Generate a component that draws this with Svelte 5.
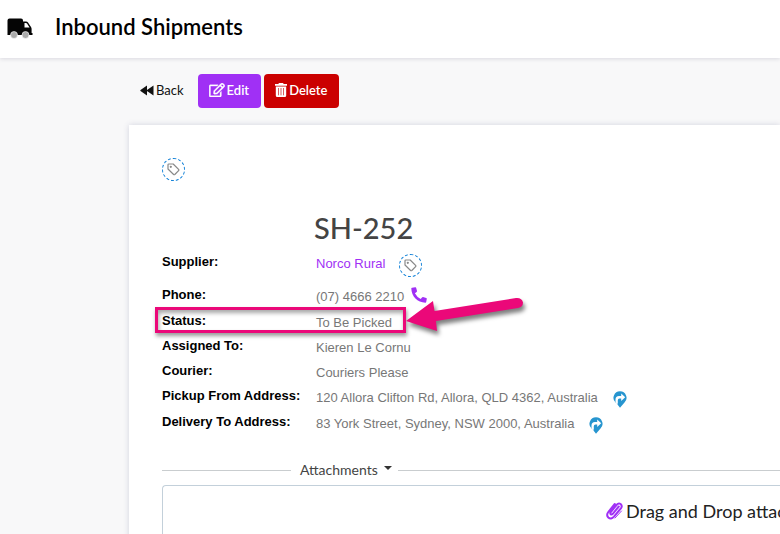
<script lang="ts">
  interface Detail {
    label: string;
    value: string;
    kind?: "supplier" | "phone" | "status" | "address";
  }

  const details: Detail[] = [
    { label: "Supplier", value: "Norco Rural", kind: "supplier" },
    { label: "Phone", value: "(07) 4666 2210", kind: "phone" },
    { label: "Status", value: "To Be Picked", kind: "status" },
    { label: "Assigned To", value: "Kieren Le Cornu" },
    { label: "Courier", value: "Couriers Please" },
    { label: "Pickup From Address", value: "120 Allora Clifton Rd, Allora, QLD 4362, Australia", kind: "address" },
    { label: "Delivery To Address", value: "83 York Street, Sydney, NSW 2000, Australia", kind: "address" },
  ];

  let showAttachments = $state(true);
</script>

{#snippet tagButton()}
  <button class="tag-btn" aria-label="Add tag">
    <svg width="13" height="13" viewBox="0 0 13 13" fill="none" stroke="#888" stroke-width="1.2" stroke-linejoin="round">
      <path d="M1 1.8 Q1 1 1.8 1 H6.2 L11.6 6.4 Q12.2 7 11.6 7.6 L7.8 11.5 Q7.2 12 6.6 11.5 L1 6 Z" />
      <circle cx="3.8" cy="3.8" r="0.5" fill="#888" />
    </svg>
  </button>
{/snippet}

<div class="page">
  <header class="header">
    <svg class="truck" width="26" height="21" viewBox="0 0 26 21">
      <path d="M2.5 .5 H14 Q16 .5 16 2.5 V3.5 H19 Q20.3 3.5 21 4.5 L24 9 Q24.6 10 24.6 11 V15 H25.5 V17 H0.5 V2.5 Q.5 .5 2.5 .5 Z" fill="#050505" />
      <path d="M17.5 5 H19 Q19.6 5 20 5.6 L22.6 9.5 H17.5 Z" fill="#fff" />
      <circle cx="7" cy="17" r="3.5" fill="#aaa" stroke="#fff" stroke-width=".6" />
      <circle cx="18.5" cy="17" r="3.5" fill="#aaa" stroke="#fff" stroke-width=".6" />
    </svg>
    <h1>Inbound Shipments</h1>
  </header>

  <main>
    <div class="toolbar">
      <button class="back-btn">
        <svg width="14" height="11" viewBox="0 0 14 11" fill="#111">
          <path d="M7 .5 V10.5 L.5 6 Q0 5.500 .5 5 Z M13.500 .5 V10.500 L7 6 Q6.500 5.500 7 5 Z" />
        </svg>
        Back
      </button>
      <button class="btn edit-btn">
        <svg width="16" height="14" viewBox="0 0 576 512" fill="currentColor" stroke="currentColor" stroke-width="12">
          <path d="M402.300 344.900l32-32c5-5 13.700-1.500 13.700 5.700V464c0 26.500-21.500 48-48 48H48c-26.500 0-48-21.500-48-48V112c0-26.500 21.500-48 48-48h273.500c7.100 0 10.700 8.600 5.700 13.700l-32 32c-1.500 1.500-3.500 2.300-5.700 2.300H48v352h352V350.500c0-2.100.8-4.100 2.300-5.600zm156.600-201.800L296.300 405.700l-90.400 10c-26.200 2.900-48.500-19.200-45.600-45.600l10-90.400L432.900 17.100c22.900-22.900 59.900-22.900 82.700 0l43.200 43.200c22.900 22.900 22.900 60 .1 82.800zM460.100 174L402 115.900 216.200 301.800l-7.300 65.300 65.300-7.300L460.100 174zm64.800-79.700l-43.200-43.200c-4.100-4.100-10.800-4.100-14.800 0L436 82l58.100 58.100 30.900-30.900c4-4.200 4-10.800-.1-14.900z" />
        </svg>
        Edit
      </button>
      <button class="btn delete-btn">
        <svg width="12" height="14" viewBox="0 0 12 14">
          <path d="M4 0 H8 L8.700 1 H12 V2.700 H0 V1 H3.300 Z M.8 3.500 H11.200 V12.500 Q11.200 14 9.700 14 H2.300 Q.8 14 .8 12.500 Z" fill="#fff" />
          <path d="M3.500 5 V12.300 M6 5 V12.300 M8.500 5 V12.300" stroke="#d96060" stroke-width="1" />
        </svg>
        Delete
      </button>
    </div>

    <section class="card">
      {@render tagButton()}
      <h2>SH-252</h2>

      <dl>
        {#each details as { label, value, kind }}
          <div class="row {kind ?? ''}">
            <dt>{label}:</dt>
            <dd>
              {#if kind === "supplier"}
                <a href="#supplier">{value}</a>
                {@render tagButton()}
              {:else if kind === "phone"}
                {value}
                <a class="call" href="tel:0746662210" aria-label="Call">
                  <svg width="16" height="16" viewBox="0 0 16 16" fill="#a030f5">
                    <path d="M1 .8 L4.300 .3 Q5 .2 5.200 .9 L6 4.100 Q6.100 4.700 5.600 5.100 L3.900 6.300 Q5.800 10 9.700 12.100 L11 10.400 Q11.400 10 12 10.100 L15.200 11 Q15.800 11.200 15.800 11.800 L15.200 15 Q15.100 15.700 14.400 15.700 C6.500 15.500 .5 9.500 .3 1.600 Q.3 .9 1 .8 Z" />
                  </svg>
                </a>
              {:else}
                {value}
                {#if kind === "address"}
                  <a class="map" href="#map" aria-label="Directions">
                    <svg width="14" height="17" viewBox="0 0 14 17">
                      <path d="M7 .3 A6.500 6.500 0 0 1 11.500 11.500 L7 16.700 L4.500 13.500 V12.500 L2.500 11.500 A6.500 6.500 0 0 1 7 .3 Z" fill="#2795cf" />
                      <path d="M2.500 11.500 V8.500 Q2.500 5 6 5 H8.200 V2.500 L12.200 6.300 L8.200 10 V7.600 H6.500 Q4.800 7.600 4.800 9.200 V12.800 Z" fill="#fff" />
                    </svg>
                  </a>
                {/if}
              {/if}
            </dd>
            {#if kind === "status"}
              <span class="highlight"></span>
              <svg class="arrow" width="124" height="44" viewBox="0 0 124 44">
                <path d="M1 25 L28 5 L29.500 15 L111 2 Q117 1.500 118 6.500 Q118 11 113 12 L31 25 L32 35 Z" fill="#eb0879" />
              </svg>
            {/if}
          </div>
        {/each}
      </dl>

      <div class="divider">
        <button onclick={() => (showAttachments = !showAttachments)}>
          Attachments
          <span class="caret"></span>
        </button>
      </div>

      {#if showAttachments}
        <div class="dropzone">
          <svg width="17" height="19" viewBox="0 0 17 19" fill="none" stroke="#a030f5" stroke-width="2" stroke-linecap="round">
            <path d="M12.800 5.500 L6.800 12.800 Q5.600 14 4.700 13.200 Q3.800 12.300 4.800 11 L10.500 4 Q12.500 1.500 14.600 3 Q16.700 5 14.900 7.300 L8 15.700 Q5 19 2.300 16.500 Q0 14 2.300 11 L8.800 3" />
            <path d="M15.500 10 L9 17" stroke-width="1" />
          </svg>
          Drag and Drop attachments here
        </div>
      {/if}
    </section>
  </main>
</div>

<style>
  :global(body) {
    margin: 0;
    background: #f8f8f9;
  }

  .page {
    height: 100vh;
    overflow: hidden;
    display: flex;
    flex-direction: column;
    font-family: Lato, sans-serif;
    color: #222;
  }

  .header {
    display: flex;
    align-items: center;
    gap: 22px;
    height: 58px;
    flex-shrink: 0;
    padding-left: 7px;
    box-sizing: border-box;
    background: #fff;
    box-shadow: 0 1px 4px rgba(50, 40, 80, 0.15);
  }

  .truck {
    margin-bottom: 2px;
  }

  h1 {
    margin: 0 0 4px;
    font-size: 22px;
    font-weight: 600;
    line-height: 28px;
    color: #000;
  }

  main {
    flex: 1;
    display: flex;
    flex-direction: column;
    padding: 16px 0 0 129px;
  }

  .toolbar {
    display: flex;
    gap: 3px;
    margin-bottom: 17px;
  }

  button {
    font-family: inherit;
    cursor: pointer;
  }

  .back-btn,
  .btn {
    display: flex;
    align-items: center;
    gap: 2px;
    height: 34px;
    padding: 0 11px 2px;
    border: none;
    border-radius: 4px;
    font-size: 13px;
    color: #fff;
  }

  .btn {
    padding: 0 12px 2px 11px;
    font-weight: 600;
  }

  .back-btn {
    background: none;
    color: #111;
  }

  .edit-btn {
    background: #a030f5;
  }

  .delete-btn {
    background: #cb0000;
  }

  .card {
    flex: 1;
    padding: 33px 0 0 33px;
    background: #fff;
    box-shadow: 0 0 6px rgba(60, 70, 120, 0.2);
  }

  .tag-btn {
    display: flex;
    align-items: center;
    justify-content: center;
    width: 23px;
    height: 23px;
    padding: 0;
    border: 1px dashed #1583d8;
    border-radius: 50%;
    background: #fff;
  }

  h2 {
    margin: 29px 0 0 152px;
    font-size: 29px;
    font-weight: 500;
    line-height: 36px;
    color: #444;
  }

  dl {
    margin: 6px 0 0;
    font-family: "Liberation Sans", Arial, sans-serif;
    font-size: 13px;
  }

  .row {
    position: relative;
    display: grid;
    grid-template-columns: 154px 1fr;
    height: 25px;
    line-height: 20px;
    white-space: nowrap;
  }

  .row.supplier {
    height: 33px;
  }

  .row.phone,
  .row.address {
    height: 26px;
  }

  dt {
    font-weight: bold;
    color: #000;
  }

  dd {
    display: flex;
    align-items: flex-start;
    margin: 0;
    padding-top: 2px;
    color: #777;
  }

  dd a {
    color: #a030f5;
    text-decoration: none;
  }

  dd .tag-btn {
    margin-left: 14px;
  }

  .call {
    display: flex;
    margin-left: 7px;
  }

  .map {
    display: flex;
    margin: 3px 0 0 15px;
  }

  .highlight {
    position: absolute;
    top: -4px;
    left: -7px;
    width: 245px;
    height: 20px;
    border: 3px solid #eb0879;
    box-shadow: 1px 3px 4px rgba(0, 0, 0, 0.4), inset 1px 3px 4px rgba(0, 0, 0, 0.35);
  }

  .arrow {
    position: absolute;
    top: -15px;
    left: 243px;
    overflow: visible;
    filter: drop-shadow(2px 4px 2px rgba(0, 0, 0, 0.5));
  }

  .divider {
    display: flex;
    align-items: center;
    margin-top: 22px;
  }

  .divider::before,
  .divider::after {
    content: "";
    width: 129px;
    height: 1px;
    background: #c9cdcf;
  }

  .divider::after {
    flex: 1;
  }

  .divider button {
    display: flex;
    align-items: center;
    gap: 6px;
    padding: 0 6px 0 9px;
    border: none;
    background: none;
    font-size: 14px;
    line-height: 20px;
    color: #444;
  }

  .caret {
    margin-bottom: 4px;
    border: 4px solid transparent;
    border-top-color: #333;
    border-bottom: none;
  }

  .dropzone {
    display: flex;
    gap: 3px;
    height: 80px;
    margin-top: 5px;
    padding: 14px 0 0 443px;
    border: 1px solid #c3d0da;
    border-right: none;
    border-radius: 4px 0 0 0;
    font-size: 18px;
    line-height: 22px;
    white-space: nowrap;
  }

  .dropzone svg {
    flex-shrink: 0;
    margin-top: 1px;
  }
</style>
